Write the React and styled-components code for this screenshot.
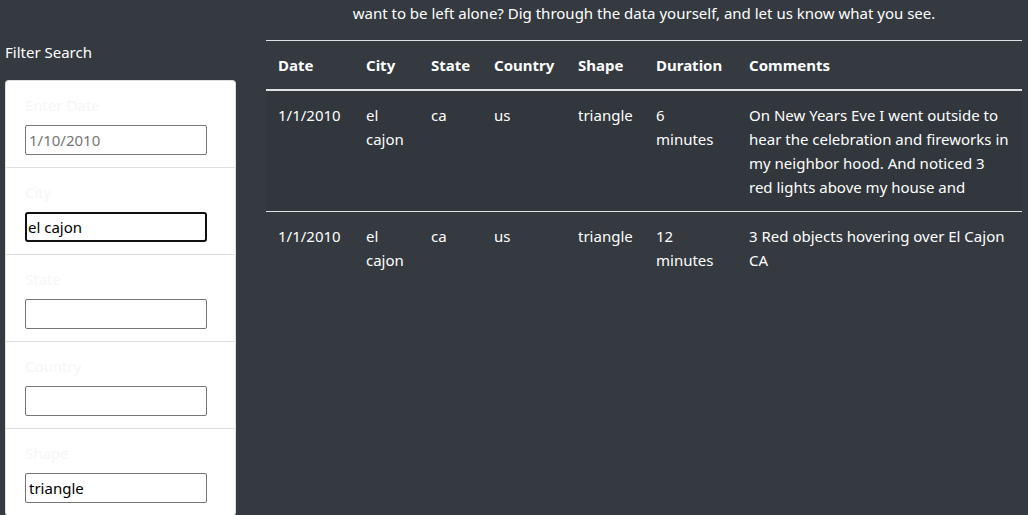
import React from "react"
import styled, { createGlobalStyle } from "styled-components"

const GlobalStyle = createGlobalStyle`
    html, body {
        margin: 0;
        padding: 0;
        background: #343a40;
        overflow: hidden;
    }
    body {
        font-family: "Noto Sans", "Open Sans", sans-serif;
        font-size: 15px;
        line-height: 24px;
        color: #ffffff;
    }
`

const Page = styled.div`
    display: grid;
    grid-template-columns: 231px 1fr;
    column-gap: 30px;
    padding: 0 6px 0 5px;
    height: 515px;
    overflow: hidden;
`

const Sidebar = styled.aside`
    padding-top: 40px;
`

const SideTitle = styled.div`
    line-height: 24px;
    margin-bottom: 16px;
`

const FilterCard = styled.ul`
    list-style: none;
    margin: 0;
    padding: 0;
    background: #ffffff;
    border: 1px solid rgba(0, 0, 0, 0.125);
    border-radius: 4px;
`

const FilterItem = styled.li`
    padding: 12px 20px 12px 19px;
    border-top: 1px solid #dfdfdf;
    height: 62px;

    &:first-child {
        border-top: none;
    }
`

const FilterLabel = styled.label`
    display: block;
    color: #f6f6f6;
    margin-bottom: 8px;
`

const FilterInput = styled.input`
    box-sizing: border-box;
    width: 182px;
    height: 30px;
    padding: 1px 3px;
    font-family: "Noto Sans", sans-serif;
    font-size: 15px;
    color: #000000;
    background: #ffffff;
    border: 1px solid #767676;
    border-radius: 2px;
    outline: none;

    &::placeholder {
        color: #757575;
    }

    ${(props) => props.$focused && `
        border: 2px solid #101010;
        border-radius: 3px;
        padding: 0 1px;
    `}
`

const Main = styled.main``

const Intro = styled.p`
    margin: 1px 0 15px;
    text-align: center;
    line-height: 24px;
`

const Table = styled.table`
    width: 100%;
    border-collapse: collapse;
    table-layout: fixed;
`

const HeadCell = styled.th`
    box-sizing: border-box;
    text-align: left;
    font-weight: 700;
    padding: 12px;
    border-top: 1px solid #dee2e6;
    border-bottom: 2px solid #dee2e6;
    ${(props) => props.$w && `width: ${props.$w}px;`}
`

const Row = styled.tr`
    background: ${(props) => (props.$striped ? "rgba(0, 0, 0, 0.05)" : "transparent")};
`

const Cell = styled.td`
    padding: 12px;
    vertical-align: top;
    border-top: 1px solid #dee2e6;
    overflow: visible;
`

const Clip = styled.div`
    max-height: 96px;
    overflow: hidden;
`

const columns = [
    { label: "Date", w: 88 },
    { label: "City", w: 65 },
    { label: "State", w: 63 },
    { label: "Country", w: 84 },
    { label: "Shape", w: 78 },
    { label: "Duration", w: 93 },
    { label: "Comments" },
]

const sightings = [
    {
        date: "1/1/2010",
        city: "el cajon",
        state: "ca",
        country: "us",
        shape: "triangle",
        duration: "6 minutes",
        comments:
            "On New Years Eve I went outside to hear the celebration and fireworks in my neighbor hood. And noticed 3 red lights above my house and",
    },
    {
        date: "1/1/2010",
        city: "el cajon",
        state: "ca",
        country: "us",
        shape: "triangle",
        duration: "12 minutes",
        comments: "3 Red objects hovering over El Cajon CA",
    },
]

const filters = [
    { label: "Enter Date", placeholder: "1/10/2010", value: "" },
    { label: "City", value: "el cajon", focused: true },
    { label: "State", value: "" },
    { label: "Country", value: "" },
    { label: "Shape", value: "triangle" },
]

export default function App() {
    return (
        <>
            <GlobalStyle />
            <Page>
                <Sidebar>
                    <SideTitle>Filter Search</SideTitle>
                    <FilterCard>
                        {filters.map((f) => (
                            <FilterItem key={f.label}>
                                <FilterLabel>{f.label}</FilterLabel>
                                <FilterInput
                                    type="text"
                                    defaultValue={f.value}
                                    placeholder={f.placeholder}
                                    $focused={f.focused}
                                />
                            </FilterItem>
                        ))}
                    </FilterCard>
                </Sidebar>
                <Main>
                    <Intro>
                        want to be left alone? Dig through the data yourself, and let us know what you see.
                    </Intro>
                    <Table>
                        <thead>
                            <tr>
                                {columns.map((c) => (
                                    <HeadCell key={c.label} $w={c.w}>
                                        {c.label}
                                    </HeadCell>
                                ))}
                            </tr>
                        </thead>
                        <tbody>
                            {sightings.map((s, i) => (
                                <Row key={i} $striped={i % 2 === 0}>
                                    <Cell>{s.date}</Cell>
                                    <Cell>{s.city}</Cell>
                                    <Cell>{s.state}</Cell>
                                    <Cell>{s.country}</Cell>
                                    <Cell>{s.shape}</Cell>
                                    <Cell>{s.duration}</Cell>
                                    <Cell>
                                        <Clip>{s.comments}</Clip>
                                    </Cell>
                                </Row>
                            ))}
                        </tbody>
                    </Table>
                </Main>
            </Page>
        </>
    )
}
